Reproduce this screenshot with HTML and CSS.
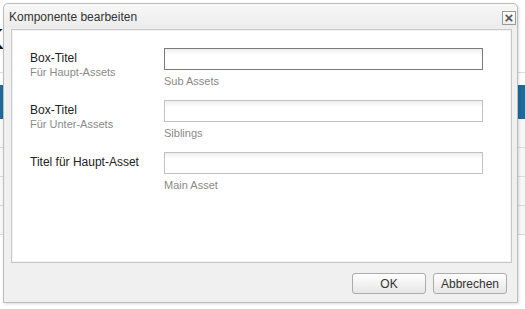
FILE: index.html
```html
<!DOCTYPE html>
<html lang="de">
<head>
	<meta charset="UTF-8">
	<title>Komponente bearbeiten</title>
	<link rel="stylesheet" href="styles.css">
</head>
<body>
	<div class="page">
		<div class="page-head"><span class="page-glyph">K</span></div>
		<div class="page-line"></div>
		<div class="page-bar"></div>
		<div class="page-row"></div>
		<div class="page-row"></div>
		<div class="page-row"></div>
		<div class="page-row"></div>
	</div>

	<div class="dialog">
		<div class="titlebar">
			<span class="title">Komponente bearbeiten</span>
			<span class="close">&#215;</span>
		</div>
		<div class="panel">
			<div class="row">
				<div class="label">
					<div class="label-main">Box-Titel</div>
					<div class="label-sub">Für Haupt-Assets</div>
				</div>
				<div class="field">
					<div class="input focus"></div>
					<div class="hint">Sub Assets</div>
				</div>
			</div>
			<div class="row">
				<div class="label">
					<div class="label-main">Box-Titel</div>
					<div class="label-sub">Für Unter-Assets</div>
				</div>
				<div class="field">
					<div class="input"></div>
					<div class="hint">Siblings</div>
				</div>
			</div>
			<div class="row">
				<div class="label">
					<div class="label-main">Titel für Haupt-Asset</div>
				</div>
				<div class="field">
					<div class="input"></div>
					<div class="hint">Main Asset</div>
				</div>
			</div>
		</div>
		<div class="footer">
			<button class="btn">OK</button>
			<button class="btn">Abbrechen</button>
		</div>
	</div>
</body>
</html>
```
FILE: styles.css
```css
body {
	margin: 0;
	padding: 0;
	background-color: #FFF;
	font-family: "Liberation Sans", Arial, sans-serif;
	overflow: hidden;
}

/* page behind the dialog */
.page {
	width: 525px;
	height: 309px;
}

.page-head {
	padding-top: 24px;
	height: 34px;
	overflow: hidden;
}

.page-glyph {
	display: block;
	width: 4px;
	overflow: hidden;
	direction: rtl;
	font-size: 30px;
	line-height: 30px;
	color: #111;
}

.page-line {
	height: 1px;
	margin-top: 14px;
	background-color: #DDD;
}

.page-bar {
	height: 34px;
	margin-top: 12px;
	background-color: #1D6A9B;
}

.page-row {
	height: 28px;
	border-bottom: 1px solid #DCDCDC;
	background-color: #F7F7F7;
}

/* dialog */
.dialog {
	position: absolute;
	left: 3px;
	top: 3px;
	width: 513px;
	height: 298px;
	border: 1px solid #BDBDBD;
	border-radius: 5px 5px 0 0;
	background-color: #F0F0F0;
	box-shadow: 1px 1px 3px rgba(0, 0, 0, 0.15);
	display: flex;
	flex-direction: column;
}

.titlebar {
	height: 24px;
	padding: 0 1px 0 5px;
	display: flex;
	align-items: center;
	justify-content: space-between;
	border-radius: 5px 5px 0 0;
	background: linear-gradient(#F8F8F8, #ECECEC);
}

.title {
	font-size: 12px;
	color: #333;
	margin-top: 2px;
}

.close {
	width: 12px;
	height: 12px;
	margin-top: 4px;
	border: 1px solid #9A9A9A;
	background: linear-gradient(#FFF, #EEE);
	font-size: 15px;
	font-weight: bold;
	line-height: 11px;
	text-align: center;
	color: #555;
}

.panel {
	height: 214px;
	margin: 1px 5px 0 7px;
	padding: 18px 0 0 18px;
	border: 1px solid #C8C8C8;
	background-color: #FFF;
	box-shadow: inset 0 0 0 1px #F2F2F2;
}

.row {
	display: flex;
	margin-bottom: 12px;
}

.label {
	width: 134px;
	padding-top: 3px;
}

.label-main {
	font-size: 12px;
	line-height: 14px;
	color: #222;
}

.label-sub {
	font-size: 11px;
	line-height: 14px;
	color: #8A8A8A;
}

.field {
	width: 319px;
}

.input {
	height: 20px;
	border: 1px solid #C2C2C2;
	background: linear-gradient(#EEE, #FFF 6px);
}

.input.focus {
	border-color: #7A7A7A;
}

.hint {
	margin-top: 4px;
	font-size: 11px;
	line-height: 14px;
	color: #8A8A8A;
}

.footer {
	flex: 1;
	display: flex;
	justify-content: flex-end;
	gap: 7px;
	padding: 10px 10px 0 0;
}

.btn {
	width: 74px;
	height: 21px;
	padding: 0;
	border: 1px solid #ABABAB;
	border-radius: 3px;
	background: linear-gradient(#FFF, #E6E6E6);
	font-family: "Liberation Sans", Arial, sans-serif;
	font-size: 12px;
	color: #333;
}
```
